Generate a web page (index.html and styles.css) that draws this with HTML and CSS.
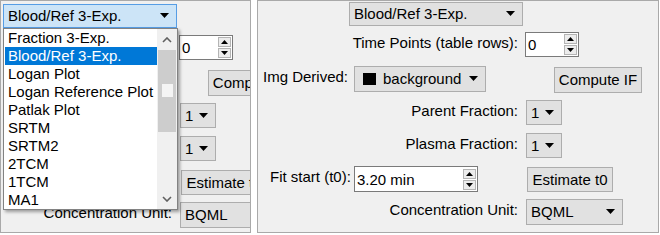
FILE: index.html
```html
<!DOCTYPE html>
<html lang="en">
<head>
    <meta charset="UTF-8">
    <title>Kinetic Model Settings</title>
    <link rel="stylesheet" href="styles.css">
</head>
<body>
    <div class="shot">
        <!-- same dialog, model combo dropped open -->
        <div class="panel panel-left">
            <div class="form form-shifted">
                <div class="combo combo-model combo-open"><span>Blood/Ref 3-Exp.</span><svg class="arrow" width="9" height="5" viewBox="0 0 9 5"><path d="M0 0h9L4.5 5z"/></svg></div>
                <div class="lbl lbl-right lbl-rows under-list">Time Points (table rows):</div>
                <div class="spinner spin-rows"><span>0</span><div class="spin-btns"><span class="spin-btn"><svg width="7" height="4" viewBox="0 0 7 4"><path d="M3.5 0L7 4H0z"/></svg></span><span class="spin-btn"><svg width="7" height="4" viewBox="0 0 7 4"><path d="M0 0h7L3.5 4z"/></svg></span></div></div>
                <div class="lbl lbl-img under-list">Img Derived:</div>
                <div class="combo combo-img under-list"><span class="combo-value"><span class="swatch"></span>background</span><svg class="arrow" width="9" height="5" viewBox="0 0 9 5"><path d="M0 0h9L4.5 5z"/></svg></div>
                <button class="btn btn-compute">Compute IF</button>
                <div class="lbl lbl-right lbl-parent under-list">Parent Fraction:</div>
                <div class="combo combo-small combo-parent"><span>1</span><svg class="arrow" width="9" height="5" viewBox="0 0 9 5"><path d="M0 0h9L4.5 5z"/></svg></div>
                <div class="lbl lbl-right lbl-plasma under-list">Plasma Fraction:</div>
                <div class="combo combo-small combo-plasma"><span>1</span><svg class="arrow" width="9" height="5" viewBox="0 0 9 5"><path d="M0 0h9L4.5 5z"/></svg></div>
                <div class="lbl lbl-fit under-list">Fit start (t0):</div>
                <div class="spinner spin-fit under-list"><span>3.20 min</span><div class="spin-btns"><span class="spin-btn"><svg width="7" height="4" viewBox="0 0 7 4"><path d="M3.5 0L7 4H0z"/></svg></span><span class="spin-btn"><svg width="7" height="4" viewBox="0 0 7 4"><path d="M0 0h7L3.5 4z"/></svg></span></div></div>
                <button class="btn btn-estimate">Estimate t0</button>
                <div class="lbl lbl-right lbl-unit">Concentration Unit:</div>
                <div class="combo combo-unit"><span>BQML</span><svg class="arrow" width="9" height="5" viewBox="0 0 9 5"><path d="M0 0h9L4.5 5z"/></svg></div>
            </div>

            <div class="combo-list">
                <div class="combo-items">
                    <div class="item">Fraction 3-Exp.</div>
                    <div class="item selected">Blood/Ref 3-Exp.</div>
                    <div class="item">Logan Plot</div>
                    <div class="item">Logan Reference Plot</div>
                    <div class="item">Patlak Plot</div>
                    <div class="item">SRTM</div>
                    <div class="item">SRTM2</div>
                    <div class="item">2TCM</div>
                    <div class="item">1TCM</div>
                    <div class="item">MA1</div>
                </div>
                <div class="scrollbar">
                    <div class="scroll-btn"><svg width="10" height="6" viewBox="0 0 10 6"><path d="M1 5l4-4 4 4" fill="none" stroke="#606060" stroke-width="1.6"/></svg></div>
                    <div class="thumb"><span class="grip"></span></div>
                    <div class="scroll-btn scroll-down"><svg width="10" height="6" viewBox="0 0 10 6"><path d="M1 1l4 4 4-4" fill="none" stroke="#606060" stroke-width="1.6"/></svg></div>
                </div>
            </div>
        </div>

        <div class="panel panel-right">
            <div class="form">
                <div class="combo combo-model"><span>Blood/Ref 3-Exp.</span><svg class="arrow" width="9" height="5" viewBox="0 0 9 5"><path d="M0 0h9L4.5 5z"/></svg></div>
                <div class="lbl lbl-right lbl-rows">Time Points (table rows):</div>
                <div class="spinner spin-rows"><span>0</span><div class="spin-btns"><span class="spin-btn"><svg width="7" height="4" viewBox="0 0 7 4"><path d="M3.5 0L7 4H0z"/></svg></span><span class="spin-btn"><svg width="7" height="4" viewBox="0 0 7 4"><path d="M0 0h7L3.5 4z"/></svg></span></div></div>
                <div class="lbl lbl-img">Img Derived:</div>
                <div class="combo combo-img"><span class="combo-value"><span class="swatch"></span>background</span><svg class="arrow" width="9" height="5" viewBox="0 0 9 5"><path d="M0 0h9L4.5 5z"/></svg></div>
                <button class="btn btn-compute">Compute IF</button>
                <div class="lbl lbl-right lbl-parent">Parent Fraction:</div>
                <div class="combo combo-small combo-parent"><span>1</span><svg class="arrow" width="9" height="5" viewBox="0 0 9 5"><path d="M0 0h9L4.5 5z"/></svg></div>
                <div class="lbl lbl-right lbl-plasma">Plasma Fraction:</div>
                <div class="combo combo-small combo-plasma"><span>1</span><svg class="arrow" width="9" height="5" viewBox="0 0 9 5"><path d="M0 0h9L4.5 5z"/></svg></div>
                <div class="lbl lbl-fit">Fit start (t0):</div>
                <div class="spinner spin-fit"><span>3.20 min</span><div class="spin-btns"><span class="spin-btn"><svg width="7" height="4" viewBox="0 0 7 4"><path d="M3.5 0L7 4H0z"/></svg></span><span class="spin-btn"><svg width="7" height="4" viewBox="0 0 7 4"><path d="M0 0h7L3.5 4z"/></svg></span></div></div>
                <button class="btn btn-estimate">Estimate t0</button>
                <div class="lbl lbl-right lbl-unit">Concentration Unit:</div>
                <div class="combo combo-unit"><span>BQML</span><svg class="arrow" width="9" height="5" viewBox="0 0 9 5"><path d="M0 0h9L4.5 5z"/></svg></div>
            </div>
        </div>
    </div>
</body>
</html>
```

FILE: styles.css
```css
* { margin: 0; padding: 0; box-sizing: border-box; }
body {
    font-family: "Liberation Sans", Arial, sans-serif;
    font-size: 15px;
    color: #000;
    background: #fff;
}

.shot {
    display: flex;
    gap: 6px;
    width: 660px;
    height: 235px;
}

.panel {
    position: relative;
    height: 233px;
    background: #f0f0f0;
    border: 1px solid #a9a9a9;
    overflow: hidden;
}

.panel-left { width: 251px; }
.panel-right { width: 402px; }

/* form grid: label col | control col | gap | right col */
.form {
    display: grid;
    width: 400px;
    grid-template-columns: 96px 164px 8px 132px;
    grid-template-rows: 30px 34px 34px 33px 33px 33px 26px;
    padding-top: 1px;
    align-items: start;
}

.form-shifted {
    margin-left: -89px;
    padding-top: 4px;
}

/* fully covered by the open list */
.under-list { visibility: hidden; }

.lbl {
    line-height: 21px;
    white-space: nowrap;
}

.lbl-right { text-align: right; }

.combo {
    display: flex;
    align-items: center;
    justify-content: space-between;
    height: 25px;
    padding: 0 7px 1px 4px;
    background: #e1e1e1;
    border: 1px solid #adadad;
}

.combo-open {
    background: #cce4f7;
    border-color: #569de5;
    margin-top: -1px;
}

.combo-value {
    display: flex;
    align-items: center;
    gap: 7px;
}

.swatch {
    width: 13px;
    height: 12px;
    margin-left: 4px;
    background: #000;
}

.arrow { flex-shrink: 0; }

.btn {
    display: flex;
    align-items: center;
    justify-content: center;
    font-family: inherit;
    font-size: 15px;
    color: #000;
    background: #e1e1e1;
    border: 1px solid #adadad;
    padding-bottom: 1px;
}

.spinner {
    display: flex;
    align-items: center;
    justify-content: space-between;
    height: 25px;
    padding-left: 2px;
    background: #fff;
    border: 1px solid #7a7a7a;
}

.spin-btns {
    display: flex;
    flex-direction: column;
    gap: 1px;
    margin-right: 1px;
}

.spin-btn {
    display: flex;
    align-items: center;
    justify-content: center;
    width: 13px;
    height: 10px;
    background: #ececec;
    border: 1px solid #b4b4b4;
}

.combo-model { grid-column: 2; grid-row: 1; margin-left: -5px; width: 174px; height: 24px; }
.lbl-rows { grid-column: 1 / 3; grid-row: 2; }
.spin-rows { grid-column: 4; grid-row: 2; margin-left: -1px; width: 54px; }
.lbl-img { grid-column: 1; grid-row: 3; padding-left: 5px; }
.combo-img { grid-column: 2; grid-row: 3; width: 132px; height: 26px; }
.btn-compute { grid-column: 4; grid-row: 3; margin-left: 28px; margin-top: 1px; width: 88px; height: 26px; }
.lbl-parent { grid-column: 1 / 3; grid-row: 4; }
.combo-parent { grid-column: 4; grid-row: 4; width: 36px; }
.lbl-plasma { grid-column: 1 / 3; grid-row: 5; }
.combo-plasma { grid-column: 4; grid-row: 5; width: 36px; }
.lbl-fit { grid-column: 1; grid-row: 6; padding-left: 12px; }
.spin-fit { grid-column: 2; grid-row: 6; width: 124px; height: 26px; }
.btn-estimate { grid-column: 4; grid-row: 6; margin-left: 1px; margin-top: 1px; width: 86px; height: 25px; }
.lbl-unit { grid-column: 1 / 3; grid-row: 7; }
.combo-unit { grid-column: 4; grid-row: 7; width: 97px; height: 26px; }

/* opened list of the model combo */
.combo-list {
    position: absolute;
    left: 2px;
    top: 27px;
    width: 175px;
    height: 182px;
    display: flex;
    background: #fff;
    border: 1px solid #828282;
    box-shadow: 2px 2px 3px rgba(0,0,0,0.35);
}

.combo-items { flex: 1; }

.item {
    height: 18px;
    line-height: 18px;
    margin-left: 1px;
    padding-left: 3px;
    white-space: nowrap;
}

.item.selected {
    background: #0078d7;
    color: #fff;
}

.scrollbar {
    display: flex;
    flex-direction: column;
    width: 20px;
    background: #f0f0f0;
}

.scroll-btn {
    display: flex;
    align-items: center;
    justify-content: center;
    height: 21px;
}

.scroll-down {
    margin-top: auto;
    height: 20px;
}

.thumb {
    display: flex;
    justify-content: center;
    height: 82px;
    margin: 0 1px;
    background: #cdcdcd;
}

.grip {
    width: 11px;
    height: 13px;
    margin-top: 34px;
    background: #f4f4f4;
}
```
